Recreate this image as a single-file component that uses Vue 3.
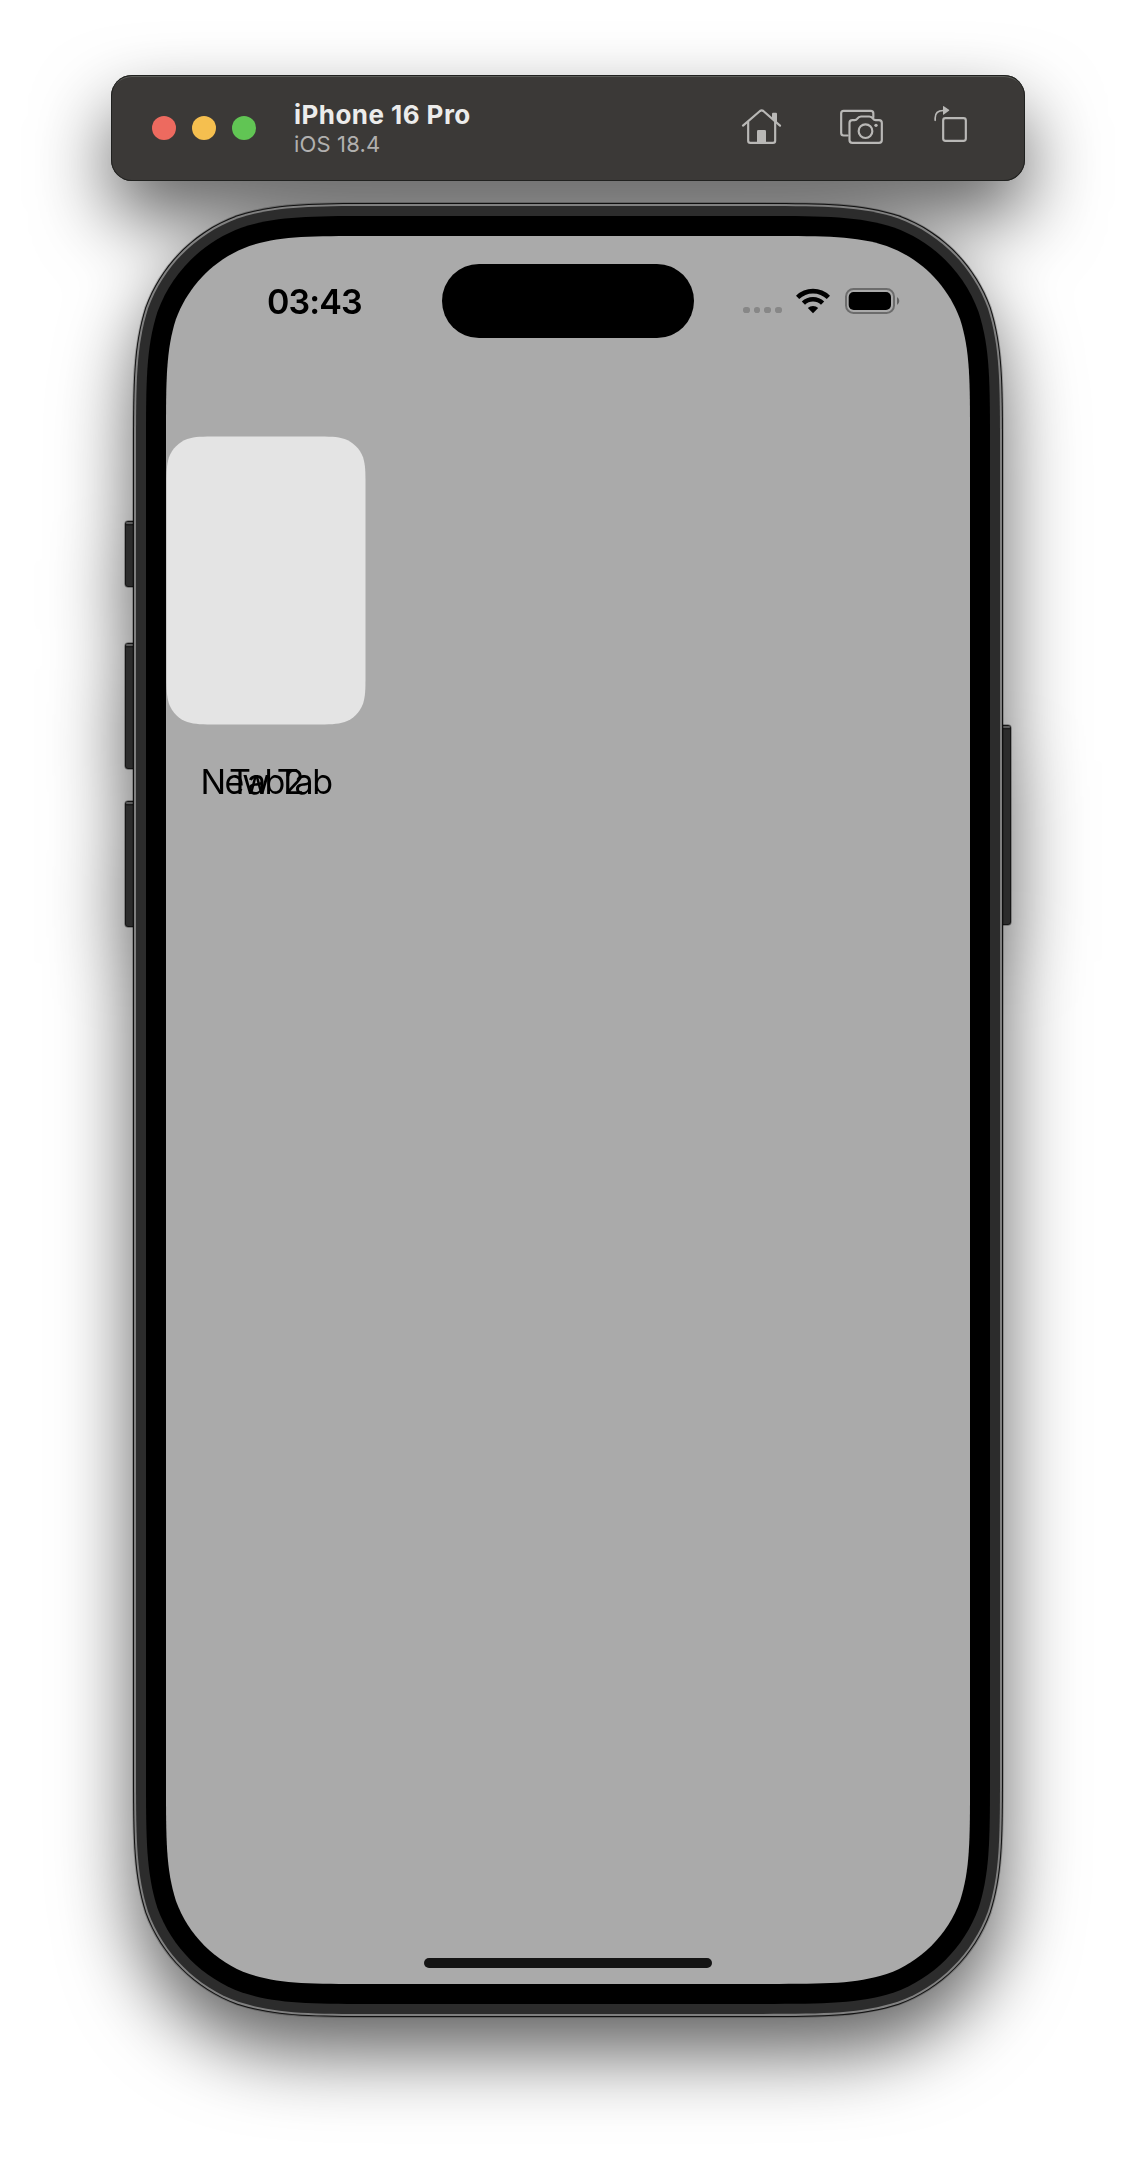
<script setup>
// Continuous ("squircle") corner rectangle path
function smooth(x, y, w, h, r) {
  const R = x + w
  const B = y + h
  const p = (a, b) => `${a.toFixed(2)} ${b.toFixed(2)}`
  const k = [1.52866, 1.08849, 0.86841, 0.63149, 0.07491, 0.37282, 0.16906].map((n) => n * r)
  const [a, b, c, d, e, f, g] = k
  return [
    `M${p(x + a, y)}L${p(R - a, y)}`,
    `C${p(R - b, y)} ${p(R - c, y)} ${p(R - d, y + e)}`,
    `C${p(R - f, y + g)} ${p(R - g, y + f)} ${p(R - e, y + d)}`,
    `C${p(R, y + c)} ${p(R, y + b)} ${p(R, y + a)}L${p(R, B - a)}`,
    `C${p(R, B - b)} ${p(R, B - c)} ${p(R - e, B - d)}`,
    `C${p(R - g, B - f)} ${p(R - f, B - g)} ${p(R - d, B - e)}`,
    `C${p(R - c, B)} ${p(R - b, B)} ${p(R - a, B)}L${p(x + a, B)}`,
    `C${p(x + b, B)} ${p(x + c, B)} ${p(x + d, B - e)}`,
    `C${p(x + f, B - g)} ${p(x + g, B - f)} ${p(x + e, B - d)}`,
    `C${p(x, B - c)} ${p(x, B - b)} ${p(x, B - a)}L${p(x, y + a)}`,
    `C${p(x, y + b)} ${p(x, y + c)} ${p(x + e, y + d)}`,
    `C${p(x + g, y + f)} ${p(x + f, y + g)} ${p(x + d, y + e)}`,
    `C${p(x + c, y)} ${p(x + b, y)} ${p(x + a, y)}Z`
  ].join('')
}

const layers = [
  { inset: 0, r: 165, fill: '#151515' },
  { inset: 1, r: 164, fill: '#808080' },
  { inset: 3, r: 162, fill: '#2c2c2c' },
  { inset: 13, r: 152, fill: '#000000' },
  { inset: 33, r: 132, fill: '#aaaaaa' }
].map((l) => ({ ...l, d: smooth(l.inset, l.inset, 870 - 2 * l.inset, 1814 - 2 * l.inset, l.r) }))

const buttons = [
  { x: -8, y: 318, h: 66 },
  { x: -8, y: 440, h: 126 },
  { x: -8, y: 598, h: 126 },
  { x: 866, y: 522, h: 200 }
]

const cardPath = smooth(0.5, 0.5, 199, 288, 33)
const labels = ['New Tab', 'Tab2']
</script>

<template>
  <div class="desktop">
    <header class="bar">
      <div class="lights">
        <span class="light red"></span>
        <span class="light yellow"></span>
        <span class="light green"></span>
      </div>
      <div class="titles">
        <div class="device">iPhone 16 Pro</div>
        <div class="os">iOS 18.4</div>
      </div>
      <nav class="tools">
        <svg class="tool" width="44" height="44" viewBox="120 132 132 132">
          <path class="line" d="M129 197 L180 153 Q185 149.500 190 153 L240 197" />
          <path class="line" d="M144.500 186 V242 Q144.500 248.500 151 248.500 H219 Q225.500 248.500 225.500 242 V186" />
          <path class="solid" d="M171 248 V214 Q171 210 175 210 H194 Q198 210 198 214 V248Z" />
          <path class="solid" d="M216 176 V161 Q216 158 219 158 H228 Q231 158 231 161 V189Z" />
        </svg>
        <svg class="tool camera" width="48" height="44" viewBox="414 132 144 132">
          <path class="line" d="M443 226.500 H431 Q423.500 226.500 423.500 219 V160 Q423.500 152.500 431 152.500 H512 Q520 152.500 520 160 V172" />
          <path class="line" d="M456 180.500 H464 Q469 180.500 472 176 Q476 169.500 483 169.500 H508 Q515 169.500 519 176 Q522 180.500 527 180.500 H537 Q545.500 180.500 545.500 189 V240 Q545.500 248.500 537 248.500 H457 Q448.500 248.500 448.500 240 V189 Q448.500 180.500 457 180.500Z" />
          <circle class="line" cx="496.500" cy="213.500" r="20.500" />
          <circle class="solid" cx="528" cy="196" r="5" />
        </svg>
        <svg class="tool rotate" width="40" height="44" viewBox="690 132 120 132">
          <rect class="line" x="729.500" y="174.500" width="68" height="68" rx="7" />
          <path class="line thin" d="M705.500 181 V174 C705.500 158 714 151.500 730 151.500" />
          <path class="solid" d="M729 139.500 Q729 137 731.500 138.500 L747 149.500 Q749 151 747 152.500 L731.500 163.500 Q729 165 729 162.500Z" />
        </svg>
      </nav>
    </header>

    <main class="phone">
      <svg class="frame" width="870" height="1814" viewBox="0 0 870 1814">
        <g v-for="(b, i) in buttons" :key="i">
          <rect :x="b.x - 0.500" :y="b.y - 0.500" width="13" :height="b.h + 1" rx="3.500" fill="none" stroke="#000" stroke-opacity=".28" />
          <rect :x="b.x" :y="b.y" width="12" :height="b.h" rx="3" fill="#151515" />
          <rect :x="b.x + 1" :y="b.y + 1" width="10" :height="b.h - 2" rx="2" fill="#2c2c2c" />
          <rect :x="b.x + 1" :y="b.y + 1" width="10" height="2" rx="1" fill="#5c5c5c" />
          <rect :x="b.x + 1" :y="b.y + 3" width="10" height="1.500" fill="#1c1c1c" />
        </g>
        <path v-for="l in layers" :key="l.inset" :d="l.d" :fill="l.fill" />
        <path :d="layers[0].d" fill="none" stroke="#000" stroke-opacity=".22" stroke-width="2" />
      </svg>

      <div class="screen">
        <div class="status">
          <div class="time">03:43</div>
          <div class="island"></div>
          <div class="indicators">
            <div class="dots"><i></i><i></i><i></i><i></i></div>
            <svg class="wifi" width="34" height="26" viewBox="0 0 34 26">
              <g fill="none" stroke="#000" stroke-width="4.600">
                <path d="M1.600 9.400 A22 22 0 0 1 32.400 9.400" />
                <path d="M7.400 15.200 A13.700 13.700 0 0 1 26.600 15.200" />
              </g>
              <path d="M11.800 20.100 A7.500 7.500 0 0 1 22.200 20.100 L17 25.300Z" />
            </svg>
            <svg class="battery" width="54" height="26" viewBox="0 0 54 26">
              <rect x="1" y="1" width="48" height="24" rx="7.500" fill="none" stroke="#000" stroke-opacity=".36" stroke-width="2" />
              <rect x="3.700" y="4" width="42.300" height="18" rx="5" />
              <path d="M52 9 Q54.300 10.500 54.300 13 Q54.300 15.500 52 17Z" fill-opacity=".42" />
            </svg>
          </div>
        </div>

        <section class="tab">
          <svg class="card" width="200" height="289" viewBox="0 0 200 289">
            <path :d="cardPath" fill="#e4e4e4" />
          </svg>
          <div class="labels">
            <span v-for="t in labels" :key="t" class="label">{{ t }}</span>
          </div>
        </section>

        <div class="home-indicator"></div>
      </div>
    </main>
  </div>
</template>

<style>
body {
  margin: 0;
  background: #fff;
}
</style>

<style scoped>
.desktop {
  box-sizing: border-box;
  width: 1136px;
  height: 2168px;
  padding-top: 75px;
  display: flex;
  flex-direction: column;
  align-items: center;
  gap: 22px;
  overflow: hidden;
  font-family: Inter, "Liberation Sans", sans-serif;
  filter: drop-shadow(0 36px 38px rgba(0, 0, 0, 0.62));
}
.bar {
  box-sizing: border-box;
  width: 914px;
  height: 106px;
  padding: 0 55px 0 41px;
  display: flex;
  align-items: center;
  border-radius: 21px;
  background: #3b3937;
  box-shadow: inset 0 0 0 1px #20211f, inset 0 3px 0 -1px #5c5d59;
}
.lights {
  display: flex;
  gap: 16px;
}
.light {
  width: 24px;
  height: 24px;
  border-radius: 50%;
}
.red { background: #ed6a5f; }
.yellow { background: #f5bf4f; }
.green { background: #61c554; }
.titles {
  margin-left: 38px;
}
.device {
  font-size: 26px;
  line-height: 32px;
  font-weight: 700;
  letter-spacing: 0.45px;
  color: #ececeb;
  white-space: nowrap;
}
.os {
  font-size: 22px;
  line-height: 27px;
  letter-spacing: 0.15px;
  color: #b1b0af;
}
.tools {
  margin: 0 0 4px auto;
  display: flex;
}
.tool {
  display: block;
}
.camera { margin-left: 54px; }
.rotate { margin-left: 44px; }
.line {
  fill: none;
  stroke: #b9b8b6;
  stroke-width: 6.500;
  stroke-linecap: round;
  stroke-linejoin: round;
}
.thin { stroke-width: 5; }
.solid { fill: #b9b8b6; }

.phone {
  position: relative;
  box-sizing: border-box;
  width: 870px;
  height: 1814px;
  padding: 33px;
}
.frame {
  position: absolute;
  inset: 0;
  overflow: visible;
}
.screen {
  position: relative;
  box-sizing: border-box;
  width: 804px;
  height: 1748px;
  padding: 28px 0 16px;
  display: flex;
  flex-direction: column;
}
.status {
  display: flex;
  align-items: center;
  height: 74px;
}
.time {
  width: 175px;
  padding: 2px 0 0 101px;
  font-size: 34px;
  line-height: 40px;
  font-weight: 580;
  letter-spacing: -0.9px;
}
.island {
  width: 252px;
  height: 74px;
  border-radius: 37px;
  background: #000;
}
.indicators {
  margin-left: 49px;
  display: flex;
  align-items: center;
}
.dots {
  display: flex;
  gap: 4.100px;
  padding-top: 18px;
}
.dots i {
  width: 6.600px;
  height: 6.600px;
  border-radius: 2.800px;
  background: #878787;
}
.wifi { margin-left: 14px; }
.battery { margin-left: 15px; overflow: visible; }
.tab {
  width: 200px;
  margin-top: 98px;
}
.card {
  display: block;
}
.labels {
  display: grid;
  margin-top: 36px;
}
.label {
  grid-area: 1 / 1;
  text-align: center;
  font-size: 34px;
  line-height: 41px;
  letter-spacing: -1.500px;
  white-space: nowrap;
}
.home-indicator {
  width: 288px;
  height: 10px;
  margin: auto auto 0;
  border-radius: 5px;
  background: #141414;
}
</style>
